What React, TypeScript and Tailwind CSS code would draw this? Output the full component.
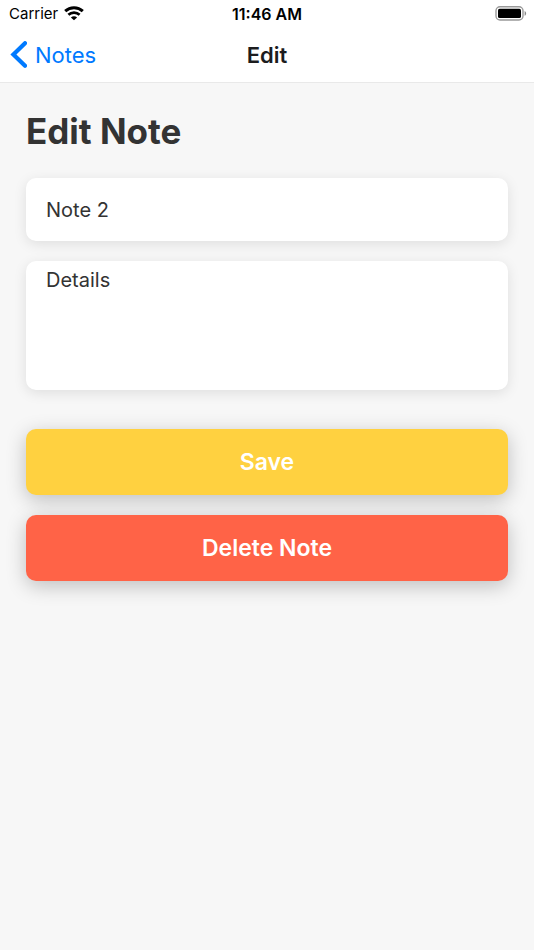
import { useState } from "react";

function WifiIcon() {
  return (
    <svg width="20" height="16" viewBox="0 0 20 16" fill="none" aria-hidden="true">
      <path d="M1.2 5.2C6.1 .6 13.9 .6 18.8 5.2" stroke="#000" strokeWidth="3" />
      <path d="M4.4 8.7c3.1-2.9 8.1-2.9 11.2 0" stroke="#000" strokeWidth="2.7" />
      <path d="M10 14.3 6.9 11.4c1.7-1.6 4.5-1.6 6.2 0z" fill="#000" />
    </svg>
  );
}

function BatteryIcon() {
  return (
    <svg width="32" height="16" viewBox="0 0 32 16" aria-hidden="true">
      <rect x="1" y=".8" width="27" height="13.2" rx="4" fill="none" stroke="#999" strokeWidth="1.4" />
      <rect x="3" y="2.8" width="23" height="9.2" rx="1.6" fill="#000" />
      <path d="M29.6 5c2 .8 2 4 0 4.8z" fill="#888" />
    </svg>
  );
}

function StatusBar() {
  return (
    <div className="grid h-7 grid-cols-3 items-center px-2 text-black">
      <div className="flex items-center gap-[6px] pl-px text-[15px]">
        <span>Carrier</span>
        <WifiIcon />
      </div>
      <span className="text-center text-base font-semibold">11:46 AM</span>
      <div className="-mr-px flex justify-end">
        <BatteryIcon />
      </div>
    </div>
  );
}

function NavBar() {
  return (
    <nav className="grid h-[55px] grid-cols-3 items-center border-b border-[#e9e9e9] px-[10px]">
      <a href="#notes" className="flex items-center gap-2 text-[22px] leading-7 text-[#007aff]">
        <svg width="17" height="28" viewBox="0 0 17 28" fill="none" aria-hidden="true">
          <path d="M15 2.2 3.4 13.5 15 24.8" stroke="currentColor" strokeWidth="4.2" strokeLinecap="round" />
        </svg>
        Notes
      </a>
      <span className="text-center text-[22px] font-semibold leading-7 text-[#1c1c1e]">Edit</span>
    </nav>
  );
}

export default function App() {
  const [title, setTitle] = useState("Note 2");
  const [details, setDetails] = useState("Details");
  const field =
    "block w-full rounded-[10px] bg-white px-5 text-xl text-[#333] shadow-[0_3px_13px_rgba(0,0,0,0.1)] outline-none";
  const button =
    "h-[66px] w-full rounded-[10px] text-[23px] font-semibold leading-7 text-white shadow-[0_5px_20px_rgba(0,0,0,0.23)]";

  return (
    <div className="flex min-h-screen flex-col bg-[#f7f7f7] font-[Inter,sans-serif]">
      <header className="bg-white">
        <StatusBar />
        <NavBar />
      </header>
      <main className="px-[26px] pt-[26px]">
        <h1 className="text-[35px] font-bold leading-[44px] text-[#333]">Edit Note</h1>
        <form className="mt-[25px]" onSubmit={(e) => e.preventDefault()}>
          <div className="flex flex-col gap-5">
            <input
              aria-label="Title"
              className={`${field} h-[63px]`}
              value={title}
              onChange={(e) => setTitle(e.target.value)}
            />
            <textarea
              aria-label="Details"
              className={`${field} h-[129px] resize-none pt-[5px]`}
              value={details}
              onChange={(e) => setDetails(e.target.value)}
            />
          </div>
          <div className="mt-[39px] flex flex-col gap-5">
            <button type="submit" className={`${button} bg-[#ffd140]`}>
              Save
            </button>
            <button type="button" className={`${button} bg-[#ff6347]`}>
              Delete Note
            </button>
          </div>
        </form>
      </main>
    </div>
  );
}
